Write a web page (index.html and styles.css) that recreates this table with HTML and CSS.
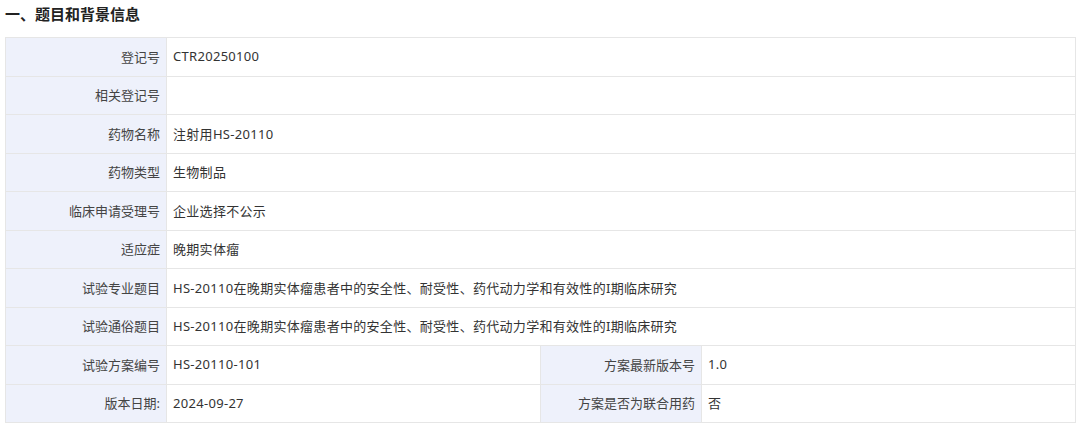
FILE: index.html
```html
<!DOCTYPE html>
<html lang="zh-CN">
<head>
<meta charset="utf-8">
<title>题目和背景信息</title>
<link rel="stylesheet" href="styles.css">
</head>
<body>
<div class="page">
  <h2 class="section-title">一、题目和背景信息</h2>
  <table class="info">
    <colgroup>
      <col class="c-label">
      <col class="c-value">
      <col class="c-label">
      <col class="c-value">
    </colgroup>
    <tbody>
      <tr><th>登记号</th><td colspan="3">CTR20250100</td></tr>
      <tr><th>相关登记号</th><td colspan="3"></td></tr>
      <tr><th>药物名称</th><td colspan="3">注射用HS-20110</td></tr>
      <tr><th>药物类型</th><td colspan="3">生物制品</td></tr>
      <tr><th>临床申请受理号</th><td colspan="3">企业选择不公示</td></tr>
      <tr><th>适应症</th><td colspan="3">晚期实体瘤</td></tr>
      <tr><th>试验专业题目</th><td colspan="3">HS-20110在晚期实体瘤患者中的安全性、耐受性、药代动力学和有效性的I期临床研究</td></tr>
      <tr><th>试验通俗题目</th><td colspan="3">HS-20110在晚期实体瘤患者中的安全性、耐受性、药代动力学和有效性的I期临床研究</td></tr>
      <tr><th>试验方案编号</th><td>HS-20110-101</td><th>方案最新版本号</th><td>1.0</td></tr>
      <tr><th>版本日期:</th><td>2024-09-27</td><th>方案是否为联合用药</th><td>否</td></tr>
    </tbody>
  </table>
</div>
</body>
</html>
```
FILE: styles.css
```css
html, body {
  margin: 0;
  padding: 0;
  background: #ffffff;
}
body {
  font-family: "Noto Sans", "Noto Sans CJK SC", sans-serif;
  color: #333333;
}
.page {
  padding: 4px 5px 0 5px;
}
.section-title {
  margin: 0 0 11px 0;
  height: 22px;
  line-height: 20px;
  font-size: 15px;
  font-weight: bold;
  color: #222222;
  font-family: "Noto Sans CJK SC", sans-serif;
}
.info {
  width: 1070px;
  border-collapse: collapse;
  table-layout: fixed;
  font-size: 13px;
  font-family: "Noto Sans", "Noto Sans CJK SC", sans-serif;
}
.c-label { width: 161px; }
.c-value { width: 374px; }
.info tr {
  height: 38.5px;
}
.info th,
.info td {
  border: 1px solid #e6e6e6;
  padding: 0 6px 1px 6px;
  vertical-align: middle;
  white-space: nowrap;
}
.info th {
  background: #eef1fb;
  font-weight: normal;
  text-align: right;
  color: #444444;
  padding-right: 6px;
}
.info td {
  text-align: left;
  color: #333333;
  letter-spacing: 0.3px;
}
```
